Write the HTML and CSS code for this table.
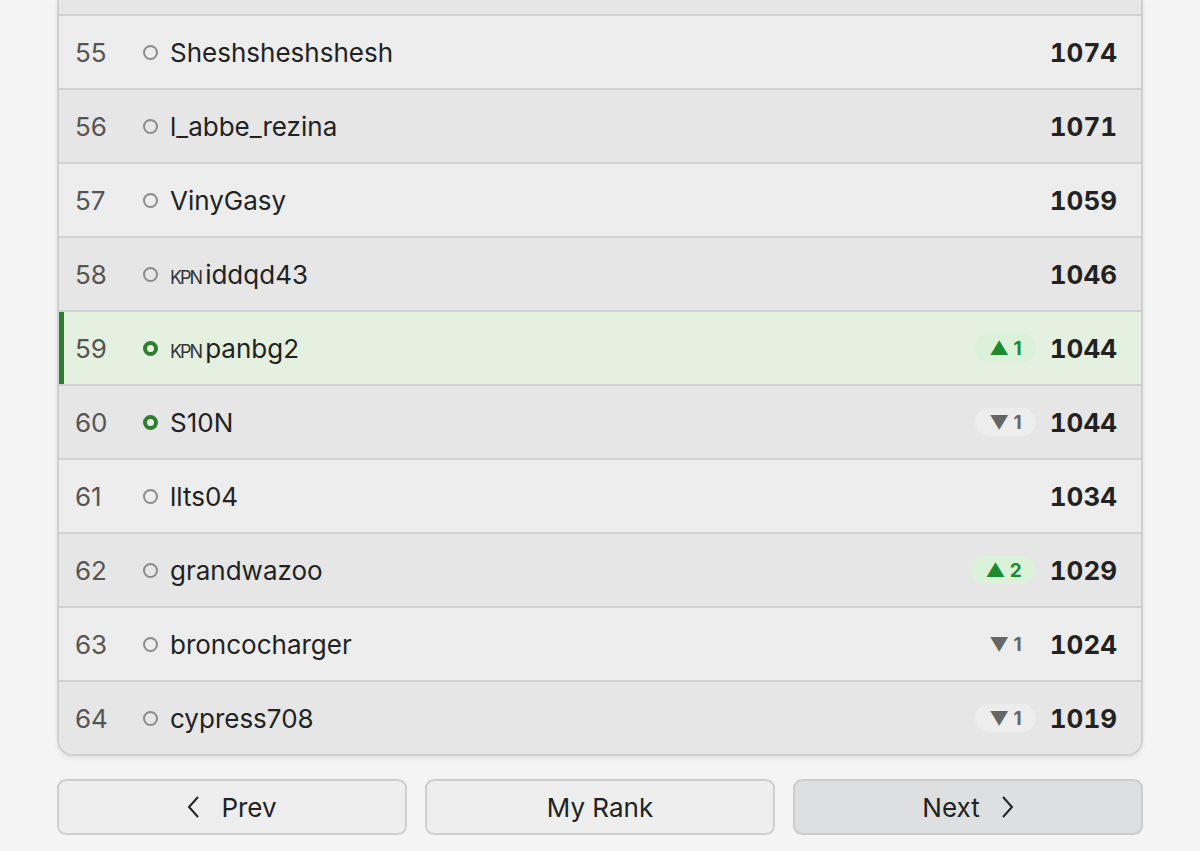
FILE: index.html
```html
<!DOCTYPE html>
<html lang="en">
<head>
  <meta charset="UTF-8">
  <meta name="viewport" content="width=device-width, initial-scale=1.0">
  <title>Leaderboard</title>
  <link rel="stylesheet" href="styles.css">
</head>
<body>
  <div class="page">
    <!-- Ranking list (scrolled, previous row peeks in at top) -->
    <div class="board">
      <div class="row row-cut"></div>
      <div class="row">
        <span class="rank">55</span>
        <span class="dot"></span>
        <span class="name">Sheshsheshshesh</span>
        <span class="score">1074</span>
      </div>
      <div class="row">
        <span class="rank">56</span>
        <span class="dot"></span>
        <span class="name">l_abbe_rezina</span>
        <span class="score">1071</span>
      </div>
      <div class="row">
        <span class="rank">57</span>
        <span class="dot"></span>
        <span class="name">VinyGasy</span>
        <span class="score">1059</span>
      </div>
      <div class="row">
        <span class="rank">58</span>
        <span class="dot"></span>
        <span class="name"><span class="tag">KPN</span>iddqd43</span>
        <span class="score">1046</span>
      </div>
      <div class="row row-me">
        <span class="rank">59</span>
        <span class="dot dot-online"></span>
        <span class="name"><span class="tag">KPN</span>panbg2</span>
        <span class="badge badge-up">▲ 1</span>
        <span class="score">1044</span>
      </div>
      <div class="row">
        <span class="rank">60</span>
        <span class="dot dot-online"></span>
        <span class="name">S10N</span>
        <span class="badge badge-down">▼ 1</span>
        <span class="score">1044</span>
      </div>
      <div class="row">
        <span class="rank">61</span>
        <span class="dot"></span>
        <span class="name">llts04</span>
        <span class="score">1034</span>
      </div>
      <div class="row">
        <span class="rank">62</span>
        <span class="dot"></span>
        <span class="name">grandwazoo</span>
        <span class="badge badge-up">▲ 2</span>
        <span class="score">1029</span>
      </div>
      <div class="row">
        <span class="rank">63</span>
        <span class="dot"></span>
        <span class="name">broncocharger</span>
        <span class="badge badge-down">▼ 1</span>
        <span class="score">1024</span>
      </div>
      <div class="row">
        <span class="rank">64</span>
        <span class="dot"></span>
        <span class="name">cypress708</span>
        <span class="badge badge-down">▼ 1</span>
        <span class="score">1019</span>
      </div>
    </div>

    <!-- Pager -->
    <div class="pager">
      <button class="btn">
        <svg class="chev" width="14" height="24" viewBox="0 0 14 24"><path d="M11 2 L2 12 L11 22" fill="none" stroke="#222" stroke-width="2"/></svg>
        Prev
      </button>
      <button class="btn">My Rank</button>
      <button class="btn btn-next">
        Next
        <svg class="chev" width="14" height="24" viewBox="0 0 14 24"><path d="M3 2 L12 12 L3 22" fill="none" stroke="#222" stroke-width="2"/></svg>
      </button>
    </div>
  </div>
</body>
</html>
```

FILE: styles.css
```css
* {
  margin: 0;
  padding: 0;
  box-sizing: border-box;
}

body {
  font-family: Inter, "Noto Sans", sans-serif;
  background: #f4f4f4;
  color: #222;
  width: 1200px;
  height: 851px;
  overflow: hidden;
}

.page {
  padding: 0 57px;
}

.board {
  border: 2px solid #cfcfcf;
  border-top: none;
  border-radius: 0 0 16px 16px;
  overflow: hidden;
  box-shadow: 0 2px 4px rgba(0, 0, 0, 0.08);
}

.row {
  display: flex;
  align-items: center;
  height: 74px;
  padding: 0 24px 0 16px;
  border-bottom: 2px solid #d2d2d2;
  background: #e6e6e6;
}

.row:nth-child(even) {
  background: #ededed;
}

.row-cut {
  height: 16px;
}

.row:last-child {
  height: 72px;
  border-bottom: none;
}

.row-me,
.row-me:nth-child(even) {
  background: #e4f0e0;
  box-shadow: inset 5px 0 0 #2e7d32;
}

.rank {
  width: 68px;
  font-size: 26px;
  color: #555;
}

.dot {
  width: 15px;
  height: 15px;
  border: 2px solid #8a8a8a;
  border-radius: 50%;
  margin-right: 12px;
}

.dot-online {
  border: 4px solid #2e7d32;
  background: #e8f3e6;
}

.name {
  flex: 1;
  font-size: 26px;
  color: #222;
}

.tag {
  font-size: 18px;
  letter-spacing: -2px;
  color: #333;
  margin-right: 4px;
}

.badge {
  height: 28px;
  padding: 0 14px;
  border-radius: 14px;
  display: flex;
  align-items: center;
  font-size: 19px;
  font-weight: 700;
  margin-right: 14px;
}

.badge-up {
  background: #dcf1d9;
  color: #1e8a2e;
}

.badge-down {
  background: #ededed;
  color: #666;
}

.score {
  font-size: 26px;
  font-weight: 700;
  font-variant-numeric: tabular-nums;
  color: #222;
}

.pager {
  display: grid;
  grid-template-columns: 1fr 1fr 1fr;
  gap: 18px;
  margin-top: 23px;
}

.btn {
  height: 56px;
  border: 2px solid #cdcdcd;
  border-radius: 9px;
  background: #eeeeee;
  font-family: inherit;
  font-size: 26px;
  color: #222;
  display: flex;
  align-items: center;
  justify-content: center;
  gap: 20px;
}

.btn-next {
  background: #dedfe1;
}
```
